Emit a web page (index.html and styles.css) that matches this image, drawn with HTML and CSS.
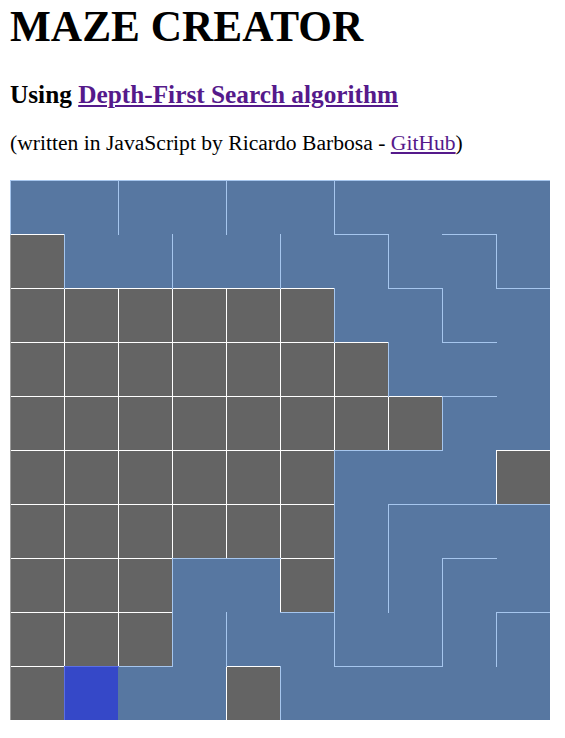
FILE: index.html
```html
<!DOCTYPE html>
<html lang="en">
<head>
<meta charset="utf-8">
<title>Maze Creator</title>
<link rel="stylesheet" href="styles.css">
</head>
<body>
<h1 class="title">MAZE CREATOR</h1>
<h2 class="subtitle">Using <a class="link" href="#">Depth-First Search algorithm</a></h2>
<p class="credit">(written in JavaScript by Ricardo Barbosa - <a class="link" href="#">GitHub</a>)</p>
<svg class="maze" width="540" height="540" viewBox="0 0 540 540">
  <rect class="cell-unvisited" x="0" y="0" width="540" height="540"/>
  <g class="cell-visited">
    <rect x="0" y="0" width="540" height="54"/>
    <rect x="54" y="54" width="486" height="54"/>
    <rect x="324" y="108" width="216" height="54"/>
    <rect x="378" y="162" width="162" height="54"/>
    <rect x="432" y="216" width="108" height="54"/>
    <rect x="324" y="270" width="162" height="54"/>
    <rect x="324" y="324" width="216" height="54"/>
    <rect x="162" y="378" width="108" height="54"/>
    <rect x="324" y="378" width="216" height="54"/>
    <rect x="162" y="432" width="378" height="54"/>
    <rect x="108" y="486" width="108" height="54"/>
    <rect x="270" y="486" width="270" height="54"/>
  </g>
  <rect class="cell-current" x="54" y="486" width="54" height="54"/>

  <g class="wall-white">
    <line x1="0" y1="54.5" x2="55" y2="54.5"/>
    <line x1="0" y1="108.5" x2="325" y2="108.5"/>
    <line x1="0" y1="162.5" x2="379" y2="162.5"/>
    <line x1="0" y1="216.5" x2="433" y2="216.5"/>
    <line x1="0" y1="270.5" x2="325" y2="270.5"/>
    <line x1="486" y1="270.5" x2="540" y2="270.5"/>
    <line x1="0" y1="324.5" x2="325" y2="324.5"/>
    <line x1="0" y1="378.5" x2="163" y2="378.5"/>
    <line x1="270" y1="378.5" x2="325" y2="378.5"/>
    <line x1="0" y1="432.5" x2="163" y2="432.5"/>
    <line x1="0" y1="486.5" x2="55" y2="486.5"/>
    <line x1="216" y1="486.5" x2="271" y2="486.5"/>

    <line x1="54.5" y1="108" x2="54.5" y2="487"/>
    <line x1="108.5" y1="108" x2="108.5" y2="487"/>
    <line x1="162.5" y1="108" x2="162.5" y2="379"/>
    <line x1="216.5" y1="108" x2="216.5" y2="379"/>
    <line x1="216.5" y1="486" x2="216.5" y2="540"/>
    <line x1="270.5" y1="108" x2="270.5" y2="433"/>
    <line x1="324.5" y1="162" x2="324.5" y2="271"/>
    <line x1="378.5" y1="216" x2="378.5" y2="271"/>
    <line x1="486.5" y1="270" x2="486.5" y2="325"/>
  </g>

  <g class="wall-edge">
    <line x1="0.5" y1="54" x2="0.5" y2="540"/>
  </g>

  <g class="wall-light">
    <line x1="0" y1="0.5" x2="540" y2="0.5"/>
    <line x1="324" y1="54.5" x2="379" y2="54.5"/>
    <line x1="432" y1="54.5" x2="487" y2="54.5"/>
    <line x1="378" y1="108.5" x2="433" y2="108.5"/>
    <line x1="486" y1="108.5" x2="540" y2="108.5"/>
    <line x1="432" y1="162.5" x2="487" y2="162.5"/>
    <line x1="432" y1="216.5" x2="487" y2="216.5"/>
    <line x1="324" y1="270.5" x2="433" y2="270.5"/>
    <line x1="378" y1="324.5" x2="540" y2="324.5"/>
    <line x1="162" y1="378.5" x2="271" y2="378.5"/>
    <line x1="432" y1="378.5" x2="487" y2="378.5"/>
    <line x1="270" y1="432.5" x2="325" y2="432.5"/>
    <line x1="486" y1="432.5" x2="540" y2="432.5"/>
    <line x1="108" y1="486.5" x2="163" y2="486.5"/>
    <line x1="324" y1="486.5" x2="433" y2="486.5"/>

    <line x1="0.5" y1="0" x2="0.5" y2="55"/>
    <line x1="54.5" y1="54" x2="54.5" y2="109"/>
    <line x1="108.5" y1="0" x2="108.5" y2="55"/>
    <line x1="162.5" y1="54" x2="162.5" y2="109"/>
    <line x1="162.5" y1="378" x2="162.5" y2="487"/>
    <line x1="216.5" y1="0" x2="216.5" y2="55"/>
    <line x1="216.5" y1="432" x2="216.5" y2="487"/>
    <line x1="270.5" y1="54" x2="270.5" y2="109"/>
    <line x1="270.5" y1="486" x2="270.5" y2="540"/>
    <line x1="324.5" y1="0" x2="324.5" y2="55"/>
    <line x1="324.5" y1="108" x2="324.5" y2="163"/>
    <line x1="324.5" y1="270" x2="324.5" y2="487"/>
    <line x1="378.5" y1="54" x2="378.5" y2="109"/>
    <line x1="378.5" y1="162" x2="378.5" y2="217"/>
    <line x1="378.5" y1="324" x2="378.5" y2="433"/>
    <line x1="432.5" y1="108" x2="432.5" y2="163"/>
    <line x1="432.5" y1="216" x2="432.5" y2="271"/>
    <line x1="432.5" y1="378" x2="432.5" y2="487"/>
    <line x1="486.5" y1="54" x2="486.5" y2="109"/>
    <line x1="486.5" y1="432" x2="486.5" y2="487"/>
  </g>

  <g class="wall-current">
    <line x1="54" y1="486.5" x2="109" y2="486.5"/>
    <line x1="54.5" y1="486" x2="54.5" y2="540"/>
  </g>
</svg>
</body>
</html>
```

FILE: styles.css
```css
html, body {
  background: #ffffff;
}

body {
  margin: 0;
  padding: 0 10px;
  font-family: "Liberation Serif", "Times New Roman", serif;
  color: #000000;
}

.title {
  margin: 0;
  padding-top: 1px;
  font-size: 43.3px;
  line-height: 50px;
  font-weight: bold;
}

.subtitle {
  margin: 29px 0 0;
  font-size: 25.3px;
  line-height: 28px;
  font-weight: bold;
}

.credit {
  margin: 23px 0 0;
  font-size: 21.6px;
  line-height: 25px;
}

.link {
  color: #551a8b;
  text-decoration: underline;
}

.maze {
  display: block;
  margin-top: 24px;
  width: 540px;
  height: 540px;
  overflow: hidden;
}

.cell-unvisited {
  fill: #646464;
}

.cell-visited rect {
  fill: #5777a1;
}

.cell-current {
  fill: #3548c8;
}

.maze line {
  stroke-width: 1;
  shape-rendering: crispEdges;
}

.wall-white line {
  stroke: #ffffff;
}

.wall-edge line {
  stroke: #9a9a9a;
}

.wall-light line {
  stroke: #a6c6ee;
}

.wall-current line {
  stroke: #5b6fe5;
}
```
